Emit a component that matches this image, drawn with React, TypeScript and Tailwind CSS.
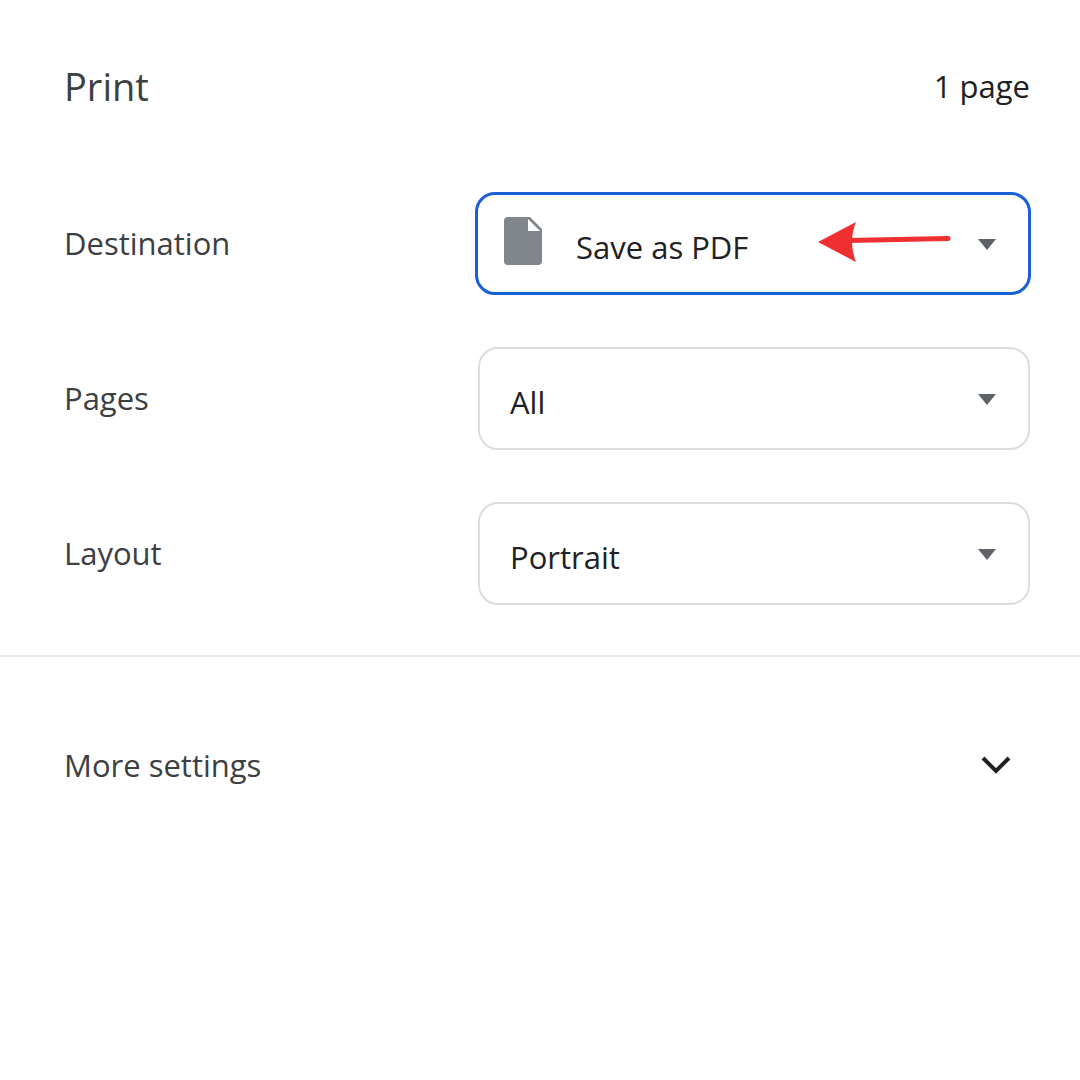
import React from "react";

const Caret = () => (
  <svg width="22" height="14" viewBox="0 0 22 14" className="shrink-0"><path d="M2 2h18l-9 11z" fill="#5f6368" /></svg>
);

function Select({ children, active }: { children: React.ReactNode; active?: boolean }) {
  return (
    <div className={`flex items-center h-[103px] rounded-[20px] bg-white pl-[30px] pr-[30px] ${active ? "border-[3px] border-[#1a5fd6] w-[556px]" : "border-2 border-[#dadce0] w-[552px] mr-[1px]"}`}>
      <div className="flex-1 flex items-center">{children}</div>
      <Caret />
    </div>
  );
}

export default function App() {
  return (
    <div className="w-[1080px] h-[1080px] bg-white text-[#202124] flex flex-col" style={{ fontFamily: '"Open Sans", "Noto Sans", sans-serif' }}>
      <div className="flex justify-between items-center pl-[64px] pr-[50px] pt-[58px] h-[115px]">
        <span className="text-[38px] text-[#3c4043]">Print</span>
        <span className="text-[31px]">1 page</span>
      </div>
      <div className="flex flex-col gap-[52px] pl-[64px] pr-[49px] mt-[77px]">
        <div className="flex justify-between items-center">
          <span className="text-[31px] text-[#3c4043]">Destination</span>
          <Select active>
            <svg width="40" height="48" viewBox="0 0 40 48" className="-ml-[4px] mr-[32px] -mt-[6px]">
              <path d="M4 0h22l12 12v32a4 4 0 0 1-4 4H4a4 4 0 0 1-4-4V4a4 4 0 0 1 4-4z" fill="#80868b" />
              <path d="M24 2l12 12H24z" fill="#fff" />
            </svg>
            <span className="text-[31px] mt-[8px]">Save as PDF</span>
            <svg width="140" height="42" viewBox="0 0 140 42" className="ml-[70px] -mt-[4px]">
              <path d="M130 17.5L30 19.5" stroke="#f03030" strokeWidth="5" strokeLinecap="round" />
              <path d="M0 21L38 1Q30 21 38 41z" fill="#f03030" />
            </svg>
          </Select>
        </div>
        <div className="flex justify-between items-center">
          <span className="text-[31px] text-[#3c4043]">Pages</span>
          <Select><span className="text-[31px] mt-[8px]">All</span></Select>
        </div>
        <div className="flex justify-between items-center">
          <span className="text-[31px] text-[#3c4043]">Layout</span>
          <Select><span className="text-[31px] mt-[8px]">Portrait</span></Select>
        </div>
      </div>
      <div className="h-[2px] bg-[#e6e6e6] mt-[50px]" />
      <div className="flex justify-between items-center pl-[64px] pr-[68px] mt-[85px]">
        <span className="text-[31px] text-[#3c4043]">More settings</span>
        <svg width="32" height="20" viewBox="0 0 32 20"><path d="M3 3l13 13L29 3" stroke="#202124" strokeWidth="4" fill="none" /></svg>
      </div>
    </div>
  );
}
